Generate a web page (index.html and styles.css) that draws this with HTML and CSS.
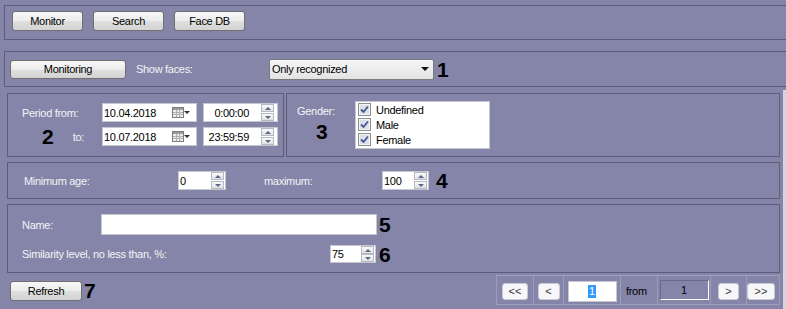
FILE: index.html
```html
<!DOCTYPE html>
<html lang="en">
<head>
    <meta charset="UTF-8">
    <meta name="viewport" content="width=device-width, initial-scale=1.0">
    <title>Face search</title>
    <link rel="stylesheet" href="styles.css">
</head>
<body>
    <div class="toolbar">
        <button class="btn">Monitor</button>
        <button class="btn">Search</button>
        <button class="btn">Face DB</button>
    </div>

    <div class="filterbar">
        <button class="btn btn-monitoring">Monitoring</button>
        <span class="lbl show-lbl">Show faces:</span>
        <div class="combo">Only recognized<span class="combo-arrow"></span></div>
        <span class="num num-1">1</span>
    </div>

    <div class="lower">
        <div class="box-row">
            <div class="box period">
                <div class="prow">
                    <span class="lbl pcol">Period from:</span>
                    <div class="field date">
                        <span>10.04.2018</span>
                        <svg class="cal" width="12" height="11" viewBox="0 0 12 11"><rect x=".5" y=".5" width="11" height="10" fill="#ececec" stroke="#7d7d7d"/><rect x="1" y="1" width="10" height="2" fill="#9c9c9c"/><path d="M1 5.5h10M1 7.5h10M4.5 3v7M7.5 3v7" stroke="#b0b0b0"/></svg>
                        <span class="drop"></span>
                    </div>
                    <div class="field time">
                        <span class="val">0:00:00</span>
                        <span class="spin"><i class="up"></i><i class="dn"></i></span>
                    </div>
                </div>
                <div class="prow prow-2">
                    <div class="pcol pcol-2"><span class="num">2</span><span class="lbl to-lbl">to:</span></div>
                    <div class="field date">
                        <span>10.07.2018</span>
                        <svg class="cal" width="12" height="11" viewBox="0 0 12 11"><rect x=".5" y=".5" width="11" height="10" fill="#ececec" stroke="#7d7d7d"/><rect x="1" y="1" width="10" height="2" fill="#9c9c9c"/><path d="M1 5.5h10M1 7.5h10M4.5 3v7M7.5 3v7" stroke="#b0b0b0"/></svg>
                        <span class="drop"></span>
                    </div>
                    <div class="field time">
                        <span class="val">23:59:59</span>
                        <span class="spin"><i class="up"></i><i class="dn"></i></span>
                    </div>
                </div>
            </div>

            <div class="box gender">
                <div class="gcol">
                    <span class="lbl">Gender:</span>
                    <span class="num num-3">3</span>
                </div>
                <div class="checklist">
                    <div class="chk-item"><svg width="13" height="13" viewBox="0 0 13 13"><rect x=".5" y=".5" width="12" height="12" fill="#f4f4f4" stroke="#8e8f8f"/><rect x="2" y="2" width="9" height="9" fill="#dde0e6"/><path d="M3 6.5l2.5 2.5 4.5-5.5" stroke="#3f5894" stroke-width="1.8" fill="none"/></svg>Undefined</div>
                    <div class="chk-item"><svg width="13" height="13" viewBox="0 0 13 13"><rect x=".5" y=".5" width="12" height="12" fill="#f4f4f4" stroke="#8e8f8f"/><rect x="2" y="2" width="9" height="9" fill="#dde0e6"/><path d="M3 6.5l2.5 2.5 4.5-5.5" stroke="#3f5894" stroke-width="1.8" fill="none"/></svg>Male</div>
                    <div class="chk-item"><svg width="13" height="13" viewBox="0 0 13 13"><rect x=".5" y=".5" width="12" height="12" fill="#f4f4f4" stroke="#8e8f8f"/><rect x="2" y="2" width="9" height="9" fill="#dde0e6"/><path d="M3 6.5l2.5 2.5 4.5-5.5" stroke="#3f5894" stroke-width="1.8" fill="none"/></svg>Female</div>
                </div>
            </div>
        </div>

        <div class="box age">
            <span class="lbl age-lbl">Minimum age:</span>
            <div class="spin-field w-min">
                <span>0</span>
                <span class="spin"><i class="up"></i><i class="dn"></i></span>
            </div>
            <span class="lbl max-lbl">maximum:</span>
            <div class="spin-field w-max">
                <span>100</span>
                <span class="spin"><i class="up"></i><i class="dn"></i></span>
            </div>
            <span class="num num-4">4</span>
        </div>

        <div class="box name">
            <div class="nrow nrow-1">
                <span class="lbl name-lbl">Name:</span>
                <div class="text-field"></div>
                <span class="num num-5">5</span>
            </div>
            <div class="nrow nrow-2">
                <span class="lbl sim-lbl">Similarity level, no less than, %:</span>
                <div class="spin-field w-sim">
                    <span>75</span>
                    <span class="spin tight"><i class="up"></i><i class="dn"></i></span>
                </div>
                <span class="num num-6">6</span>
            </div>
        </div>

        <div class="bottom">
            <button class="btn btn-refresh">Refresh</button>
            <span class="num num-7">7</span>

            <div class="pager">
                <div class="pc c1"><button class="pbtn w-first">&lt;&lt;</button></div>
                <div class="pc c2"><button class="pbtn w-prev">&lt;</button></div>
                <div class="pc c3"><div class="pg-input"><span class="sel">1</span></div></div>
                <div class="pc c4">from</div>
                <div class="pc c5"><div class="pg-total">1</div></div>
                <div class="pc c6"><button class="pbtn w-next">&gt;</button></div>
                <div class="pc c7"><button class="pbtn w-last">&gt;&gt;</button></div>
            </div>
        </div>
    </div>
</body>
</html>
```

FILE: styles.css
```css
body {
    margin: 0;
    width: 786px;
    height: 309px;
    overflow: hidden;
    background-color: #8584a9;
    font-family: "Liberation Sans", Arial, sans-serif;
    font-size: 11px;
    letter-spacing: -0.3px;
    color: #000;
}
.lbl {
    color: #f4f4f4;
    white-space: nowrap;
}
.num {
    font-weight: bold;
    font-size: 21px;
    line-height: 21px;
    letter-spacing: 0;
    color: #000;
}

/* buttons */
.btn {
    box-sizing: border-box;
    width: 71px;
    height: 20px;
    padding: 0;
    border: 1px solid #707070;
    border-radius: 3px;
    background: linear-gradient(#f7f7f7, #ececec 50%, #dfdfdf 51%, #d3d3d3);
    font: 11px "Liberation Sans", Arial, sans-serif;
    letter-spacing: -0.3px;
    color: #000;
}
.btn-monitoring {
    width: 116px;
    height: 19px;
}
.btn-refresh {
    width: 72px;
    margin: 6px 0 0 3px;
}

/* top bars */
.toolbar {
    box-sizing: border-box;
    height: 35px;
    margin: 5px 0 0 4px;
    border: 1px solid #5d5c79;
    border-right: none;
    display: flex;
    align-items: flex-start;
    gap: 10px;
    padding: 5px 0 0 7px;
}
.filterbar {
    box-sizing: border-box;
    height: 36px;
    margin: 11px 0 0 4px;
    border: 1px solid #5d5c79;
    border-right: none;
    display: flex;
    align-items: center;
    padding-left: 5px;
}
.show-lbl {
    box-sizing: border-box;
    width: 133px;
    margin-left: 10px;
}
.combo {
    box-sizing: border-box;
    width: 165px;
    height: 21px;
    border: 1px solid #7a7a7a;
    border-radius: 2px;
    background: linear-gradient(#f6f6f6, #e3e3e3);
    display: flex;
    align-items: center;
    padding: 0 4px 0 2px;
}
.combo-arrow {
    margin-left: auto;
    border-left: 4px solid transparent;
    border-right: 4px solid transparent;
    border-top: 4px solid #111;
}
.num-1 {
    margin-left: 3px;
}

/* lower area */
.lower {
    box-sizing: border-box;
    width: 786px;
    height: 219px;
    margin-top: 3px;
    padding: 3px 0 0 7px;
    border-right: 3px solid #d6d6dc;
}
.box {
    box-sizing: border-box;
    border: 1px solid #5d5c79;
}
.box-row {
    display: flex;
    gap: 2px;
}

/* period */
.period {
    width: 277px;
    height: 64px;
    padding-top: 9px;
}
.prow {
    display: flex;
    align-items: center;
    height: 19px;
}
.prow-2 {
    margin-top: 5px;
}
.pcol {
    box-sizing: border-box;
    width: 94px;
    flex-shrink: 0;
    padding-left: 14px;
}
.pcol-2 {
    display: flex;
    align-items: center;
    padding-left: 34px;
}
.to-lbl {
    margin-left: 19px;
}
.field {
    box-sizing: border-box;
    height: 19px;
    background: #fff;
    border: 1px solid #c7c7d2;
    display: flex;
    align-items: center;
}
.date {
    width: 95px;
    padding: 0 6px 0 1px;
}
.cal {
    margin-left: auto;
}
.drop {
    width: 0;
    border-left: 3px solid transparent;
    border-right: 3px solid transparent;
    border-top: 3px solid #333;
}
.time {
    width: 75px;
    margin-left: 6px;
    padding-right: 3px;
}
.time .val {
    flex: 1;
    text-align: right;
    padding-right: 12px;
}

/* spin buttons */
.spin {
    display: flex;
    flex-direction: column;
    gap: 1px;
    margin-left: auto;
}
.spin.tight {
    gap: 0;
}
.spin i {
    box-sizing: border-box;
    width: 13px;
    height: 8px;
    border: 1px solid #b8b8c2;
    background: linear-gradient(#fafafa, #e0e0e4);
    display: flex;
    align-items: center;
    justify-content: center;
}
.spin i::after {
    content: "";
    border-left: 3px solid transparent;
    border-right: 3px solid transparent;
}
.spin .up::after {
    border-bottom: 3px solid #56688c;
}
.spin .dn::after {
    border-top: 3px solid #56688c;
}

/* gender */
.gender {
    width: 494px;
    height: 64px;
    display: flex;
    align-items: flex-start;
}
.gcol {
    box-sizing: border-box;
    width: 68px;
    flex-shrink: 0;
    padding: 10px 0 0 10px;
    display: flex;
    flex-direction: column;
    line-height: 14px;
}
.num-3 {
    margin: 3px 0 0 19px;
    line-height: 21px;
}
.checklist {
    box-sizing: border-box;
    width: 135px;
    height: 48px;
    margin-top: 7px;
    background: #fff;
    border: 1px solid #c7c7d2;
}
.chk-item {
    display: flex;
    align-items: center;
    height: 15px;
    padding-left: 2px;
}
.chk-item svg {
    margin-right: 5px;
}

/* age */
.age {
    width: 773px;
    height: 37px;
    margin-top: 5px;
    display: flex;
    align-items: center;
}
.age-lbl {
    box-sizing: border-box;
    width: 170px;
    padding-left: 16px;
}
.max-lbl {
    width: 118px;
    margin-left: 38px;
}
.spin-field {
    box-sizing: border-box;
    height: 19px;
    background: #fff;
    border: 1px solid #c7c7d2;
    display: flex;
    align-items: center;
    padding: 0 1px;
}
.w-min {
    width: 48px;
}
.w-max {
    width: 47px;
}
.w-sim {
    width: 46px;
    height: 18px;
}
.num-4 {
    margin-left: 7px;
}

/* name */
.name {
    width: 773px;
    height: 69px;
    margin-top: 5px;
    padding-top: 9px;
}
.nrow {
    display: flex;
    align-items: center;
}
.nrow-1 {
    height: 21px;
}
.nrow-2 {
    height: 18px;
    margin-top: 10px;
}
.name-lbl {
    box-sizing: border-box;
    width: 93px;
    padding-left: 14px;
}
.sim-lbl {
    box-sizing: border-box;
    width: 322px;
    padding-left: 14px;
}
.text-field {
    box-sizing: border-box;
    width: 276px;
    height: 21px;
    background: #fff;
    border: 1px solid #c7c7d2;
}
.num-5 {
    margin-left: 2px;
}
.num-6 {
    margin-left: 3px;
}

/* bottom */
.bottom {
    width: 773px;
    margin-top: 2px;
    display: flex;
    align-items: flex-start;
}
.num-7 {
    margin: 5px 0 0 2px;
}
.pager {
    box-sizing: border-box;
    margin-left: auto;
    height: 30px;
    display: flex;
    border: 1px solid #9d9cbc;
    border-right: none;
}
.pc {
    box-sizing: border-box;
    border-right: 1px solid #9d9cbc;
    display: flex;
    align-items: center;
    justify-content: center;
    padding-top: 2px;
}
.c1 { width: 37px; }
.c2 { width: 30px; }
.c3 { width: 57px; }
.c4 {
    width: 37px;
    justify-content: flex-start;
    padding-left: 5px;
}
.c5 { width: 53px; }
.c6 { width: 36px; }
.c7 {
    width: 33px;
    justify-content: flex-start;
}
.pbtn {
    box-sizing: border-box;
    height: 17px;
    padding: 0;
    border: 1px solid #c9c9d4;
    border-radius: 3px;
    background: #f7f7f9;
    font: 11px "Liberation Sans", Arial, sans-serif;
    color: #333;
}
.w-first { width: 26px; }
.w-prev { width: 22px; }
.w-next { width: 21px; }
.w-last { width: 28px; }
.pg-input {
    box-sizing: border-box;
    width: 49px;
    height: 21px;
    background: #fff;
    border: 1px solid #c7c7d2;
    display: flex;
    align-items: center;
    justify-content: center;
}
.sel {
    background: #3399ff;
    color: #fff;
    padding: 0 1px;
    line-height: 13px;
}
.pg-total {
    box-sizing: border-box;
    width: 49px;
    height: 20px;
    border-top: 1px solid #6a6987;
    border-left: 1px solid #6a6987;
    border-right: 1px solid #fff;
    border-bottom: 1px solid #fff;
    display: flex;
    align-items: center;
    justify-content: center;
    margin-top: -2px;
}
```
